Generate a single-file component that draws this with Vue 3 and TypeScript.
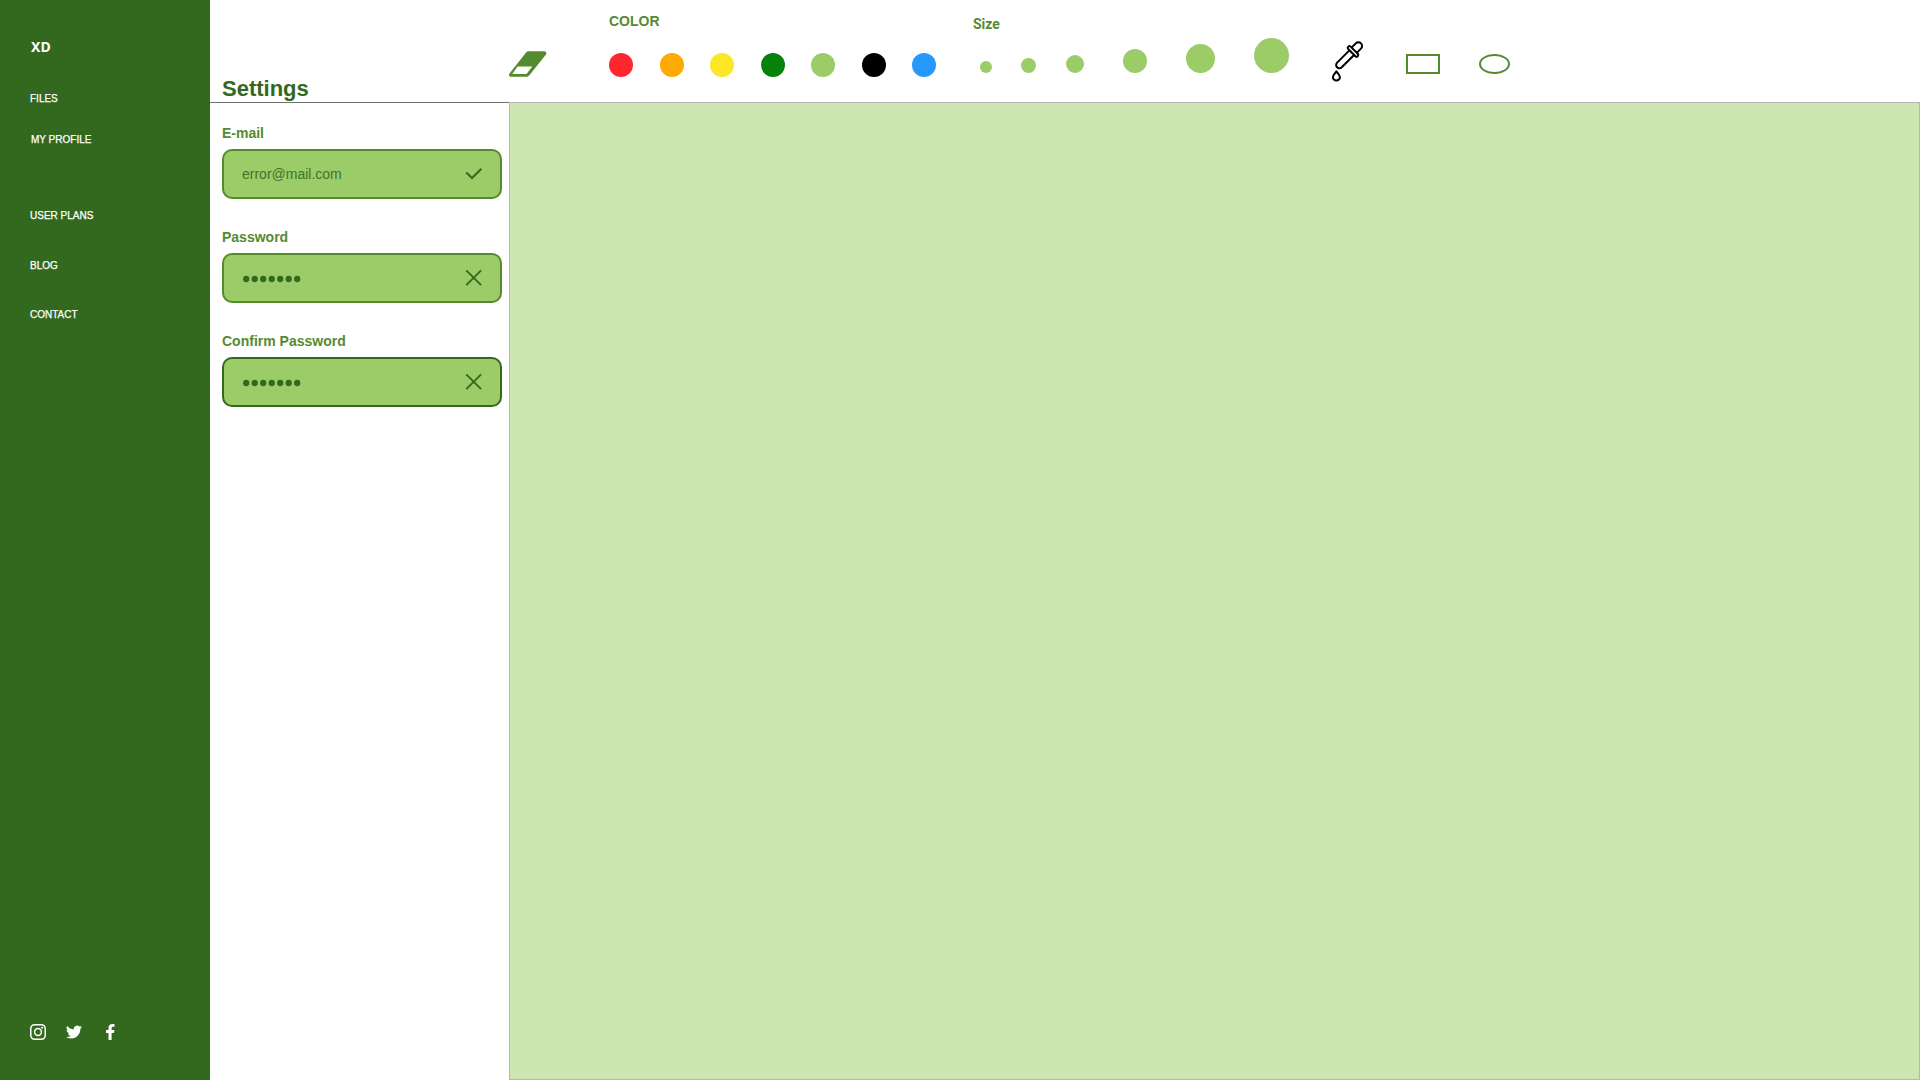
<script setup lang="ts">
interface Field {
  id: string
  label: string
  value: string
  secret: boolean
  valid: boolean
  focused?: boolean
}

const menu = [
  { label: 'FILES', key: 'files' },
  { label: 'MY PROFILE', key: 'profile' },
  { label: 'USER PLANS', key: 'plans' },
  { label: 'BLOG', key: 'blog' },
  { label: 'CONTACT', key: 'contact' },
]

const fields: Field[] = [
  { id: 'email', label: 'E-mail', value: 'error@mail.com', secret: false, valid: true },
  { id: 'password', label: 'Password', value: '', secret: true, valid: false },
  { id: 'confirm', label: 'Confirm Password', value: '', secret: true, valid: false, focused: true },
]

const colors = ['red', 'orange', 'yellow', 'green', 'lime', 'black', 'blue']
const sizes = ['s1', 's2', 's3', 's4', 's5', 's6']
</script>

<template>
  <div class="app">
    <aside class="sidebar">
      <div class="logo">XD</div>
      <nav class="menu">
        <a v-for="item in menu" :key="item.key" class="menu-item" :class="item.key">{{ item.label }}</a>
      </nav>
      <div class="social">
        <svg class="instagram" width="16" height="16" viewBox="0 0 16 16" fill="none" stroke="#fff" stroke-width="1.5">
          <rect x="0.75" y="0.75" width="14.5" height="14.5" rx="3.9" />
          <circle cx="8" cy="8" r="3.4" />
          <circle cx="12.2" cy="3.8" r="1" fill="#fff" stroke="none" />
        </svg>
        <svg class="twitter" width="16" height="16" viewBox="0 0 24 24" fill="#fff">
          <path d="M23.95 4.57a10 10 0 0 1-2.82.77 4.96 4.96 0 0 0 2.16-2.72c-.95.55-2 .95-3.13 1.18a4.92 4.92 0 0 0-8.38 4.48C7.69 8.1 4.07 6.13 1.64 3.16a4.93 4.93 0 0 0 1.52 6.57 4.9 4.9 0 0 1-2.23-.61v.06a4.92 4.92 0 0 0 3.95 4.83 5 5 0 0 1-2.21.08 4.94 4.94 0 0 0 4.6 3.42A9.87 9.87 0 0 1 0 19.54a14 14 0 0 0 7.55 2.21c9.05 0 14-7.5 14-13.98 0-.21 0-.42-.02-.63a9.94 9.94 0 0 0 2.42-2.57z" />
        </svg>
        <svg class="facebook" width="9" height="16" viewBox="0 0 9 16" fill="#fff">
          <path d="M2.5 16V9H0V6.1h2.5V4c0-2.6 1.5-4 3.8-4 1 0 2.2.2 2.2.2v2.5H7.2C6 2.7 5.6 3.4 5.6 4.2v1.9h2.8L8 9H5.6v7z" />
        </svg>
      </div>
    </aside>

    <div class="workspace">
      <header class="header">
        <h1 class="title">Settings</h1>
        <svg class="eraser" width="38" height="27" viewBox="0 0 38 27">
          <path
            fill="#558b2f"
            fill-rule="evenodd"
            d="M19.8 0.3H35.2C37.4 0.3 38 2.4 36.6 4L20.6 24C19.4 25.4 18.4 25.8 17.2 25.8H2C0 25.8 -0.6 23.8 0.7 22.2L16.5 2.2C17.5 0.9 18.5 0.3 19.8 0.3ZM8.6 15.6L3.3 22.9H17.5L23.3 15.6Z"
          />
        </svg>
        <section class="colors">
          <h2 class="tool-label">COLOR</h2>
          <div class="swatches">
            <span v-for="color in colors" :key="color" class="swatch" :class="color"></span>
          </div>
        </section>
        <section class="sizes">
          <h2 class="tool-label">Size</h2>
          <div class="brushes">
            <span v-for="size in sizes" :key="size" class="brush" :class="size"></span>
          </div>
        </section>
        <svg class="dropper" width="36" height="44" viewBox="0 0 36 44" fill="none" stroke="#000" stroke-width="2" stroke-linejoin="round">
          <g transform="translate(23 11.4) rotate(45)">
            <path d="M-3.7 -1.6V-7.6A3.7 3.7 0 0 1 3.7 -7.6V-1.6" />
            <rect x="-6.7" y="-1.7" width="13.4" height="3.4" rx="1.6" />
            <path d="M-3.3 1.8V19.2A3.3 3.3 0 0 0 3.3 19.2V1.8" />
          </g>
          <path d="M6.4 31.4C5.2 33.3 2.9 35.3 2.9 37.2A3.5 3.3 0 0 0 9.9 37.2C9.9 35.3 7.6 33.3 6.4 31.4Z" />
        </svg>
        <span class="rectangle"></span>
        <span class="ellipse"></span>
      </header>

      <main class="content">
        <form class="settings">
          <div v-for="field in fields" :key="field.id" class="field">
            <label class="field-label">{{ field.label }}</label>
            <div class="field-box" :class="{ focused: field.focused }">
              <span v-if="!field.secret" class="value">{{ field.value }}</span>
              <svg v-else class="dots" width="60" height="8" viewBox="0 0 60 8" fill="#33691e">
                <circle v-for="n in 7" :key="n" :cx="4.2 + (n - 1) * 8.5" cy="4" r="3.15" />
              </svg>
              <svg v-if="field.valid" class="state" width="18" height="18" viewBox="0 0 18 18" fill="none" stroke="#33691e" stroke-width="2">
                <path d="M1.2 7.6L7 13L16.4 3.7" />
              </svg>
              <svg v-else class="state" width="18" height="18" viewBox="0 0 18 18" fill="none" stroke="#33691e" stroke-width="1.9">
                <path d="M1.3 1.4L16.1 16.2M16.1 1.4L1.3 16.2" />
              </svg>
            </div>
          </div>
        </form>
        <div class="canvas"></div>
      </main>
    </div>
  </div>
</template>

<style>
body {
  margin: 0;
  overflow: hidden;
}
</style>

<style scoped>
.app {
  display: flex;
  width: 1920px;
  height: 1080px;
  background: #fff;
  font-family: "Liberation Sans", Arial, sans-serif;
}

.app * {
  box-sizing: border-box;
}

.app svg {
  display: block;
  flex: none;
}

.sidebar {
  display: flex;
  flex-direction: column;
  flex: none;
  width: 210px;
  padding: 39px 30px 40px;
  background: #33691e;
  color: #fff;
}

.logo {
  padding-left: 1px;
  font: bold 14px/16px "Noto Sans", sans-serif;
}

.menu {
  display: flex;
  flex-direction: column;
  font-size: 10px;
  line-height: 12px;
  -webkit-text-stroke: 0.25px #fff;
}

.menu-item.files {
  margin-top: 38px;
}

.menu-item.profile {
  margin-top: 29px;
  padding-left: 1px;
}

.menu-item.plans {
  margin-top: 64px;
}

.menu-item.blog {
  margin-top: 38px;
}

.menu-item.contact {
  margin-top: 37px;
}

.social {
  display: flex;
  margin-top: auto;
}

.twitter {
  margin-left: 20px;
}

.facebook {
  margin-left: 24px;
}

.workspace {
  display: flex;
  flex-direction: column;
  flex: 1;
}

.header {
  display: flex;
  align-items: flex-start;
  height: 102px;
}

.title {
  width: 287px;
  margin: 76px 0 0 12px;
  color: #33691e;
  font-size: 22px;
  line-height: 26px;
}

.eraser {
  margin-top: 51px;
}

.tool-label {
  margin: 0;
  color: #558b2f;
  font-size: 14px;
  line-height: 16px;
}

.colors {
  margin: 13px 0 0 62px;
}

.swatches {
  display: flex;
  justify-content: space-between;
  width: 327px;
  margin-top: 24px;
}

.swatch {
  width: 24px;
  height: 24px;
  border-radius: 50%;
}

.red { background: #ff272d; }
.orange { background: #fea904; }
.yellow { background: #fbe725; }
.green { background: #05820b; }
.lime { background: #9ccc68; }
.black { background: #000; }
.blue { background: #2699fb; }

.sizes {
  margin: 16px 0 0 37px;
}

.sizes .tool-label {
  font-family: Roboto, sans-serif;
}

.brushes {
  display: flex;
  align-items: flex-end;
  height: 35px;
  margin: 6px 0 0 7px;
}

.brush {
  border-radius: 50%;
  background: #9ccc68;
}

.s1 { width: 12px; height: 12px; }
.s2 { width: 15px; height: 15px; margin-left: 29px; }
.s3 { width: 18px; height: 18px; margin-left: 30px; }
.s4 { width: 24px; height: 24px; margin-left: 39px; }
.s5 { width: 29px; height: 29px; margin-left: 39px; }
.s6 { width: 35px; height: 35px; margin-left: 39px; }

.dropper {
  margin: 40px 0 0 41px;
}

.rectangle {
  width: 34px;
  height: 20px;
  margin: 54px 0 0 40px;
  border: 2px solid #558b2f;
}

.ellipse {
  width: 31px;
  height: 20px;
  margin: 54px 0 0 39px;
  border: 2px solid #558b2f;
  border-radius: 50%;
}

.content {
  display: flex;
  flex: 1;
}

.settings {
  width: 299px;
  padding: 22px 7px 0 12px;
  border-top: 1px solid #707070;
}

.field {
  margin-bottom: 30px;
}

.field-label {
  display: block;
  color: #558b2f;
  font-size: 14px;
  font-weight: bold;
  line-height: 16px;
}

.field-box {
  display: flex;
  align-items: center;
  justify-content: space-between;
  height: 50px;
  margin-top: 8px;
  padding: 0 17px 0 18px;
  border: 2px solid #558b2f;
  border-radius: 10px;
  background: #9ccc68;
}

.field-box.focused {
  border-color: #33691e;
}

.value {
  color: #33691e;
  font-size: 14px;
  line-height: 16px;
  opacity: 0.88;
}

.dots {
  margin-top: 2px;
}

.canvas {
  flex: 1;
  border: 1px solid #707070;
  background: #9ccc65;
  opacity: 0.5;
}
</style>
